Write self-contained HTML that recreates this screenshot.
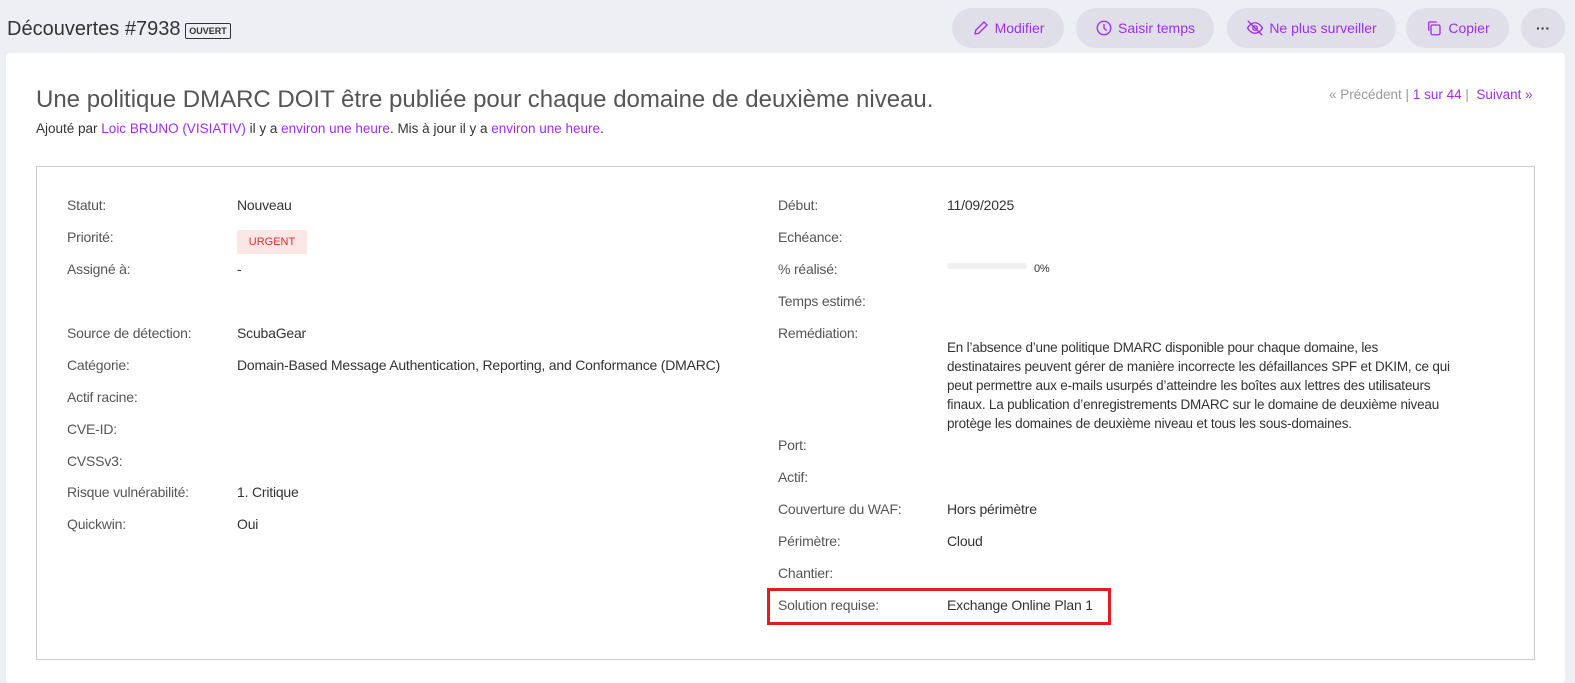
<!DOCTYPE html>
<html><head><meta charset="utf-8"><style>
*{box-sizing:border-box;margin:0;padding:0}
body{width:1575px;height:668px;background:#eeeff4;font-family:"Liberation Sans",Arial,sans-serif;color:#333;position:relative;overflow:hidden}
.abs{position:absolute;white-space:nowrap}
.btn{position:absolute;top:8px;height:40px;border-radius:20px;background:#e0dfe9;color:#9d2ef0;font-size:14px;display:flex;align-items:center;justify-content:center;gap:5px}
.btn svg{width:18px;height:18px;fill:none;stroke:#9d2ef0;stroke-width:1.8;stroke-linecap:round;stroke-linejoin:round}
.card{position:absolute;left:6px;top:53px;width:1559px;height:630px;background:#fff;border-radius:4px}
.box{position:absolute;left:36px;top:166px;width:1499px;height:494px;border:1px solid #ccc}
.l{position:absolute;font-size:14px;color:#555;white-space:nowrap;letter-spacing:-0.2px}
.v{position:absolute;font-size:14px;color:#333;white-space:nowrap;letter-spacing:-0.2px}
a{color:#9d2ef0;text-decoration:none}
</style></head><body>
<div class="abs" style="left:7px;top:18px;font-size:20px;color:#333">Découvertes #7938</div>
<div class="abs" style="left:185px;top:23px;width:46px;height:16px;border:1px solid #333;border-radius:2px;font-size:9px;font-weight:bold;text-align:center;line-height:14px">OUVERT</div>

<div class="btn" style="left:952px;width:112px"><svg viewBox="0 0 24 24"><path d="M4 20l1-5L16 4l4 4L9 19z"/></svg>Modifier</div>
<div class="btn" style="left:1076px;width:138px"><svg viewBox="0 0 24 24"><circle cx="12" cy="12" r="9"/><path d="M12 7v5l3 3"/></svg>Saisir temps</div>
<div class="btn" style="left:1227px;width:169px"><svg viewBox="0 0 24 24"><path d="M2 12s4-7 10-7 10 7 10 7-4 7-10 7S2 12 2 12z"/><circle cx="12" cy="12" r="3"/><path d="M3 3l18 18"/></svg>Ne plus surveiller</div>
<div class="btn" style="left:1406px;width:103px"><svg viewBox="0 0 24 24"><rect x="8" y="8" width="12" height="13" rx="2"/><path d="M5 15V5a1 1 0 0 1 1-1h9"/></svg>Copier</div>
<div class="btn" style="left:1521px;width:44px;color:#333;font-size:14px;font-weight:bold">···</div>

<div class="card"></div>
<div class="abs" style="left:36px;top:86px;font-size:24px;color:#555">Une politique DMARC DOIT être publiée pour chaque domaine de deuxième niveau.</div>
<div class="abs" style="left:36px;top:121px;font-size:13.5px;color:#333">Ajouté par <a>Loic BRUNO (VISIATIV)</a> il y a <a>environ une heure</a>. Mis à jour il y a <a>environ une heure</a>.</div>
<div class="abs" style="left:1329px;top:87px;font-size:13.5px;color:#999">« Précédent | <a>1 sur 44</a> | &nbsp;<a>Suivant »</a></div>

<div class="box"></div>
<div class="l" style="left:67px;top:197px">Statut:</div><div class="v" style="left:237px;top:197px">Nouveau</div>
<div class="l" style="left:67px;top:229px">Priorité:</div>
<div class="abs" style="left:237px;top:230px;width:70px;height:24px;background:#fde6e6;border-radius:2px;color:#e0301e;font-size:11px;text-align:center;line-height:24px">URGENT</div>
<div class="l" style="left:67px;top:261px">Assigné à:</div><div class="v" style="left:237px;top:261px">-</div>
<div class="l" style="left:67px;top:325px">Source de détection:</div><div class="v" style="left:237px;top:325px">ScubaGear</div>
<div class="l" style="left:67px;top:357px">Catégorie:</div><div class="v" style="left:237px;top:357px">Domain-Based Message Authentication, Reporting, and Conformance (DMARC)</div>
<div class="l" style="left:67px;top:389px">Actif racine:</div>
<div class="l" style="left:67px;top:421px">CVE-ID:</div>
<div class="l" style="left:67px;top:453px">CVSSv3:</div>
<div class="l" style="left:67px;top:484px">Risque vulnérabilité:</div><div class="v" style="left:237px;top:484px">1. Critique</div>
<div class="l" style="left:67px;top:516px">Quickwin:</div><div class="v" style="left:237px;top:516px">Oui</div>

<div class="l" style="left:778px;top:197px">Début:</div><div class="v" style="left:947px;top:197px">11/09/2025</div>
<div class="l" style="left:778px;top:229px">Echéance:</div>
<div class="l" style="left:778px;top:261px">% réalisé:</div>
<div class="abs" style="left:947px;top:263px;width:80px;height:6px;background:#f0f0f0;border-radius:3px"></div>
<div class="v" style="left:1034px;top:263px;font-size:11px">0%</div>
<div class="l" style="left:778px;top:293px">Temps estimé:</div>
<div class="l" style="left:778px;top:325px">Remédiation:</div>
<div class="v" style="left:947px;top:338px;width:530px;white-space:normal;line-height:19px;font-size:13.5px">En l’absence d’une politique DMARC disponible pour chaque domaine, les<br>destinataires peuvent gérer de manière incorrecte les défaillances SPF et DKIM, ce qui<br>peut permettre aux e-mails usurpés d’atteindre les boîtes aux lettres des utilisateurs<br>finaux. La publication d’enregistrements DMARC sur le domaine de deuxième niveau<br>protège les domaines de deuxième niveau et tous les sous-domaines.</div>
<div class="l" style="left:778px;top:437px">Port:</div>
<div class="l" style="left:778px;top:469px">Actif:</div>
<div class="l" style="left:778px;top:501px">Couverture du WAF:</div><div class="v" style="left:947px;top:501px">Hors périmètre</div>
<div class="l" style="left:778px;top:533px">Périmètre:</div><div class="v" style="left:947px;top:533px">Cloud</div>
<div class="l" style="left:778px;top:565px">Chantier:</div>
<div class="abs" style="left:767px;top:588px;width:344px;height:37px;border:3px solid #e31b23"></div>
<div class="l" style="left:778px;top:597px">Solution requise:</div><div class="v" style="left:947px;top:597px">Exchange Online Plan 1</div>
</body></html>
